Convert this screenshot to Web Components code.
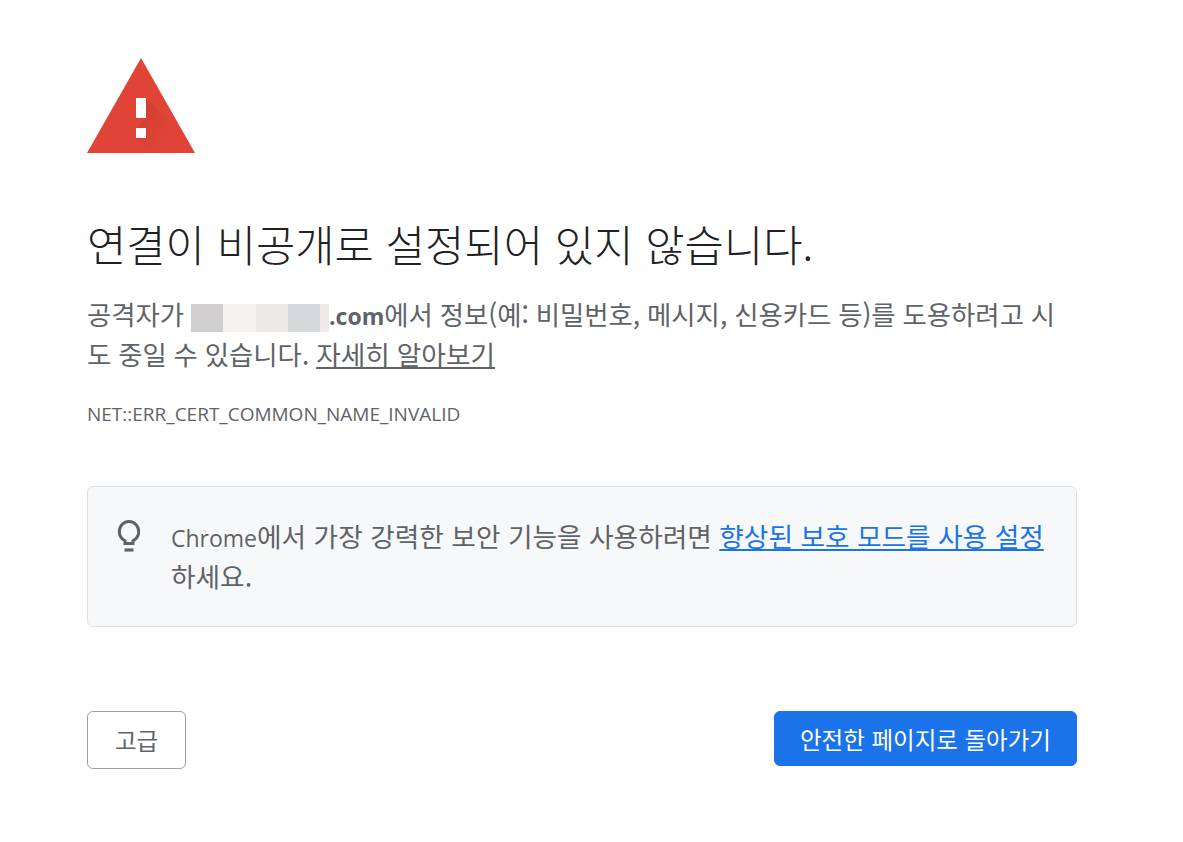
<!DOCTYPE html>
<html lang="ko">
<head>
<meta charset="utf-8">
<title>개인 정보 보호 오류</title>
<style>
  html, body { margin: 0; background: #fff; }
  body { font-family: "Noto Sans CJK KR", "Open Sans", sans-serif; color: #5f6368; }
</style>
</head>
<body>
<interstitial-page>
  <warning-icon></warning-icon>
  <main-heading>연결이 비공개로 설정되어 있지 않습니다.</main-heading>
  <error-message>
    공격자가 <blurred-host></blurred-host><latin-text bold>.com</latin-text>에서 정보(예: 비밀번호, 메시지, 신용카드 등)를 도용하려고 시도 중일 수 있습니다. <a href="#">자세히 알아보기</a>
  </error-message>
  <error-code>NET::ERR_CERT_COMMON_NAME_INVALID</error-code>
  <tip-box><latin-text>Chrome</latin-text>에서 가장 강력한 보안 기능을 사용하려면 <a href="#">향상된 보호 모드를 사용 설정</a>하세요.</tip-box>
  <button-row>
    <action-button slot="left">고급</action-button>
    <action-button slot="right" primary>안전한 페이지로 돌아가기</action-button>
  </button-row>
</interstitial-page>

<script>
// small helper so every element below stays a few lines
function define(name, html) {
  customElements.define(name, class extends HTMLElement {
    constructor() {
      super();
      this.attachShadow({ mode: 'open' });
      this.shadowRoot.innerHTML = html;
    }
  });
}

define('interstitial-page', /*html*/ `
  <style>
    :host { display: block; width: 990px; padding: 58px 0 0 87px; }
  </style>
  <slot></slot>
`);

define('warning-icon', /*html*/ `
  <style>
    :host { display: block; height: 95px; }
    svg { display: block; }
  </style>
  <svg width="108" height="95" viewBox="0 0 108 95">
    <defs>
      <linearGradient id="shade" x1="0" y1="0" x2="1" y2="1">
        <stop offset="0" stop-color="#b3342a" stop-opacity=".45"/>
        <stop offset=".75" stop-color="#b3342a" stop-opacity="0"/>
      </linearGradient>
    </defs>
    <path d="M54 0 108 95H0Z" fill="#e04437"/>
    <path d="M59 40 88 69V95H64L49 80V70L59 60Z" fill="url(#shade)"/>
    <path d="M49 40h10v20H49zM49 70h10v10H49z" fill="#fff"/>
  </svg>
`);

define('main-heading', /*html*/ `
  <style>
    :host { display: block; margin-top: 63px; font-size: 42.7px; line-height: 54px; font-weight: 300; color: #202124; white-space: nowrap; }
  </style>
  <slot></slot>
`);

define('error-message', /*html*/ `
  <style>
    :host { display: block; margin-top: 24px; font-size: 26.4px; word-spacing: -.5px; line-height: 40px; }
    ::slotted(a) { color: #5f6368; font-size: 26.7px; text-decoration: underline; }
  </style>
  <slot></slot>
`);

// no whitespace in this template: it would show up between the inline text
define('latin-text', /*html*/ `<style>
    :host { font-family: "Open Sans", sans-serif; font-size: 23px; line-height: 1; }
    :host([bold]) { font-weight: 700; }
  </style><slot></slot>`);

define('blurred-host', /*html*/ `
  <style>
    :host { display: inline-flex; width: 138px; height: 28px; vertical-align: -7px; }
    i { display: block; height: 100%; }
  </style>
  <i style="width:32px;background:#d0cece"></i>
  <i style="width:33px;background:#f4f3f1"></i>
  <i style="width:32px;background:#ebeae8"></i>
  <i style="width:32px;background:#d6d9db"></i>
  <i style="width:9px;background:#eeeaea"></i>
`);

define('error-code', /*html*/ `
  <style>
    :host { display: block; margin-top: 26px; font-family: "Open Sans", sans-serif; font-size: 19px; line-height: 28px; }
  </style>
  <slot></slot>
`);

define('tip-box', /*html*/ `
  <style>
    :host {
      display: flex; box-sizing: border-box; height: 141px; margin-top: 58px;
      padding: 29px 24px 0 29px; gap: 30px;
      background: #f7f8fa; border: 1px solid #dfe0e2; border-radius: 6px;
      font-size: 26.7px; line-height: 40px;
    }
    svg { flex: none; margin-top: 3px; }
    ::slotted(a) { color: #1a73e8; text-decoration: underline; }
  </style>
  <svg width="24" height="34" viewBox="0 0 24 34" fill="none" stroke="#5f6368">
    <path d="M8 24.5v-2.600C4.600 20 2.300 16.600 2.300 12.600 2.300 7 6.600 2.600 12 2.600s9.700 4.400 9.700 10c0 4-2.300 7.400-5.700 9.300v2.600Z" stroke-width="3"/>
    <path d="M7.500 31h9" stroke-width="3.200"/>
  </svg>
  <div><slot></slot></div>
`);

define('button-row', /*html*/ `
  <style>
    :host { display: flex; justify-content: space-between; align-items: flex-start; margin-top: 84px; }
  </style>
  <slot name="left"></slot>
  <slot name="right"></slot>
`);

define('action-button', /*html*/ `
  <style>
    :host {
      display: flex; align-items: center; justify-content: center; box-sizing: border-box;
      width: 99px; height: 58px; border: 1px solid #9aa0a6; border-radius: 6px;
      font-size: 23.500px; color: #5f6368; background: #fff; cursor: pointer;
    }
    :host([primary]) { width: 303px; height: 55px; border-color: #1a73e8; background: #1a73e8; color: #fff; }
  </style>
  <slot></slot>
`);
</script>
</body>
</html>
